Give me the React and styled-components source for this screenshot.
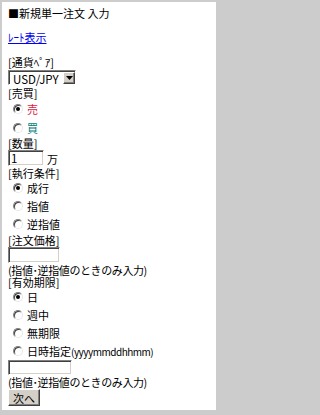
import React, { useState } from "react";
import styled, { createGlobalStyle } from "styled-components";

const Global = createGlobalStyle`
  html, body {
    margin: 0;
    padding: 0;
    background: #cccccc;
  }
  body {
    font-family: "Noto Sans CJK JP", "DejaVu Sans", sans-serif;
    font-size: 11px;
    color: #000;
  }
`;

const Page = styled.div`
  width: 214px;
  height: 408px;
  margin: 2px 0 0 2px;
  box-sizing: border-box;
  background: #fff;
  padding: 4px 6px 0 6px;
  overflow: hidden;
`;

const Line = styled.div`
  height: ${(p) => p.$h || 12}px;
  line-height: ${(p) => p.$h || 12}px;
  margin-top: ${(p) => p.$top || 0}px;
  white-space: nowrap;
`;

const Title = styled(Line)`
  font-size: 11px;
`;

const RateLink = styled.a`
  color: #0000ee;
  text-decoration: underline;
`;

const Note = styled(Line)`
  font-size: 11px;
  letter-spacing: -0.4px;
`;

const SelectBox = styled.div`
  position: relative;
  width: 68px;
  height: 15px;
  margin-top: 2px;
  box-sizing: border-box;
  border: 1px solid;
  border-color: #808080 #ffffff #ffffff #808080;
  box-shadow: inset 1px 1px 0 #404040;
  background: #fff;
`;

const Select = styled.select`
  appearance: none;
  border: 0;
  outline: 0;
  margin: 0;
  padding: 0 0 0 4px;
  width: 100%;
  height: 13px;
  font-family: "Noto Sans CJK JP", "DejaVu Sans", sans-serif;
  font-size: 11.5px;
  line-height: 13px;
  background: transparent;
  color: #000;
  box-sizing: border-box;
`;

const Arrow = styled.span`
  position: absolute;
  right: 0;
  top: 1px;
  width: 12px;
  height: 12px;
  box-sizing: border-box;
  background: #d4d0c8;
  border: 1px solid;
  border-color: #ffffff #404040 #404040 #ffffff;
  box-shadow: inset -1px -1px 0 #808080;
  display: flex;
  align-items: center;
  justify-content: center;
  pointer-events: none;
`;

const Row = styled.label`
  display: flex;
  align-items: center;
  height: ${(p) => p.$h || 18}px;
  padding-left: 5px;
  gap: 4px;
`;

const Radio = styled.input.attrs({ type: "radio" })`
  appearance: none;
  margin: 0;
  width: 10px;
  height: 10px;
  border-radius: 50%;
  box-sizing: border-box;
  background: #fff;
  border: 1px solid;
  border-color: #808080 #e8e8e8 #e8e8e8 #808080;
  box-shadow: inset 1px 1px 0 #404040;
  display: grid;
  place-items: center;
  &:checked::after {
    content: "";
    width: 4px;
    height: 4px;
    border-radius: 50%;
    background: #000;
  }
`;

const Tone = styled.span`
  color: ${(p) => p.$color || "#000"};
  line-height: 12px;
  white-space: nowrap;
`;

const Small = styled.span`
  font-size: 10px;
  letter-spacing: -0.5px;
`;

const QtyRow = styled.div`
  display: flex;
  align-items: flex-end;
  gap: 3px;
  margin-top: 1px;
  height: 16px;
`;

const TextBox = styled.input`
  display: block;
  width: ${(p) => p.$w}px;
  height: ${(p) => p.$h || 16}px;
  box-sizing: border-box;
  margin: ${(p) => p.$top || 0}px 0 0 0;
  padding: 0 2px;
  font-family: "Noto Sans CJK JP", "DejaVu Sans", sans-serif;
  font-size: 11.5px;
  line-height: 12px;
  border: 1px solid;
  border-color: #808080 #ffffff #ffffff #808080;
  box-shadow: inset 1px 1px 0 #404040, inset -1px -1px 0 #d4d0c8;
  outline: none;
  background: #fff;
`;

const Unit = styled.span`
  line-height: 13px;
`;

const Button = styled.button`
  display: block;
  margin-top: 1px;
  width: 32px;
  height: 17px;
  padding: 0;
  font-family: "Noto Sans CJK JP", "DejaVu Sans", sans-serif;
  font-size: 11px;
  line-height: 12px;
  background: #d4d0c8;
  color: #000;
  border: 1px solid;
  border-color: #ffffff #404040 #404040 #ffffff;
  box-shadow: inset -1px -1px 0 #808080;
`;

function RadioRow({ name, value, checked, onPick, children, color, h }) {
  return (
    <Row $h={h}>
      <Radio name={name} checked={checked} onChange={() => onPick(value)} />
      <Tone $color={color}>{children}</Tone>
    </Row>
  );
}

export default function App() {
  const [side, setSide] = useState("sell");
  const [exec, setExec] = useState("market");
  const [limit, setLimit] = useState("day");

  return (
    <>
      <Global />
      <Page>
        <Title $h={14}>■新規単一注文 入力</Title>
        <Line $h={13} $top={11}>
          <RateLink href="#">ﾚｰﾄ表示</RateLink>
        </Line>

        <Line $top={12}>[通貨ﾍﾟｱ]</Line>
        <SelectBox>
          <Select defaultValue="USD/JPY">
            <option>USD/JPY</option>
          </Select>
          <Arrow>
            <svg width="7" height="4" viewBox="0 0 7 4">
              <path d="M0 0h7L3.5 4z" fill="#000" />
            </svg>
          </Arrow>
        </SelectBox>

        <Line $top={2}>[売買]</Line>
        <RadioRow name="side" value="sell" checked={side === "sell"} onPick={setSide} color="#dd2244" h={19}>
          売
        </RadioRow>
        <RadioRow name="side" value="buy" checked={side === "buy"} onPick={setSide} color="#007a7a" h={19}>
          買
        </RadioRow>

        <Line>[数量]</Line>
        <QtyRow>
          <TextBox $w={36} defaultValue="1" />
          <Unit>万</Unit>
        </QtyRow>

        <Line $top={1}>[執行条件]</Line>
        <RadioRow name="exec" value="market" checked={exec === "market"} onPick={setExec}>
          成行
        </RadioRow>
        <RadioRow name="exec" value="limit" checked={exec === "limit"} onPick={setExec}>
          指値
        </RadioRow>
        <RadioRow name="exec" value="stop" checked={exec === "stop"} onPick={setExec}>
          逆指値
        </RadioRow>

        <Line $top={1}>[注文価格]</Line>
        <TextBox $w={52} $top={1} />
        <Note $top={1}>(指値･逆指値のときのみ入力)</Note>

        <Line>[有効期限]</Line>
        <RadioRow name="limit" value="day" checked={limit === "day"} onPick={setLimit}>
          日
        </RadioRow>
        <RadioRow name="limit" value="week" checked={limit === "week"} onPick={setLimit}>
          週中
        </RadioRow>
        <RadioRow name="limit" value="none" checked={limit === "none"} onPick={setLimit}>
          無期限
        </RadioRow>
        <RadioRow name="limit" value="date" checked={limit === "date"} onPick={setLimit}>
          日時指定<Small>(yyyymmddhhmm)</Small>
        </RadioRow>
        <TextBox $w={64} $h={15} />
        <Note $top={1}>(指値･逆指値のときのみ入力)</Note>
        <Button>次へ</Button>
      </Page>
    </>
  );
}
